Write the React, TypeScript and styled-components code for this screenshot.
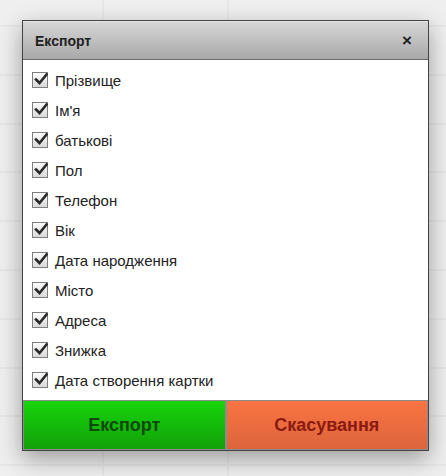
import React, { useState } from 'react';
import styled, { createGlobalStyle } from 'styled-components';

const GlobalStyle = createGlobalStyle`
  html, body {
    margin: 0;
    padding: 0;
    width: 446px;
    height: 476px;
    overflow: hidden;
    background: #efefef;
  }
`;

const Page = styled.div`
  width: 446px;
  height: 476px;
  padding: 20px 0 0 22px;
  box-sizing: border-box;
  background-color: #efefef;
  background-image:
    repeating-linear-gradient(to bottom, transparent 0, transparent 25px, #e7e7e7 25px, #e7e7e7 27px, transparent 27px, transparent 48.8px),
    linear-gradient(to right, transparent 102px, #e8e8e8 102px, #e8e8e8 104px, transparent 104px, transparent 227px, #e8e8e8 227px, #e8e8e8 229px, transparent 229px);
  font-family: "Liberation Sans", Arial, sans-serif;
`;

const Dialog = styled.div`
  width: 407px;
  box-sizing: border-box;
  border: 1px solid #444;
  background: #fff;
  box-shadow: 0 8px 22px rgba(0, 0, 0, 0.35);
`;

const Header = styled.div`
  height: 39px;
  display: flex;
  align-items: center;
  justify-content: space-between;
  padding: 0 16px 0 12px;
  background: linear-gradient(to bottom, #d6d6d6, #a9a9a9);
  border-bottom: 1px solid #6a6a6a;
  border-top: 1px solid #e6e6e6;
  box-sizing: border-box;
`;

const Title = styled.span`
  font-size: 14px;
  font-weight: bold;
  color: #222;
`;

const Close = styled.span`
  font-size: 17px;
  font-weight: bold;
  color: #222;
  cursor: pointer;
`;

const List = styled.div`
  padding: 5px 0 5px 9px;
`;

const Row = styled.label`
  height: 30px;
  display: flex;
  align-items: center;
  gap: 7px;
  font-size: 15px;
  color: #222;
  cursor: pointer;
`;

const Box = styled.span`
  width: 16px;
  height: 16px;
  box-sizing: border-box;
  border: 1px solid #7e7e7e;
  background: linear-gradient(to bottom, #fdfdfd, #d8d8d8);
  position: relative;
  flex-shrink: 0;

  svg {
    position: absolute;
    left: 1px;
    top: -1px;
  }
`;

const Footer = styled.div`
  display: flex;
  gap: 2px;
  background: #8c8c8c;
  padding: 1px;
`;

const Button = styled.button<{ $variant: 'ok' | 'cancel' }>`
  flex: 1;
  height: 48px;
  border: none;
  padding: 0;
  font-family: inherit;
  font-size: 18px;
  font-weight: bold;
  cursor: pointer;
  color: ${p => (p.$variant === 'ok' ? '#0d4a08' : '#8a1a10')};
  background: ${p =>
    p.$variant === 'ok'
      ? 'linear-gradient(to bottom, #17d40b, #12a109)'
      : 'linear-gradient(to bottom, #fa7442, #dc643c)'};
`;

const fields = [
  'Прізвище',
  "Ім'я",
  'батькові',
  'Пол',
  'Телефон',
  'Вік',
  'Дата народження',
  'Місто',
  'Адреса',
  'Знижка',
  'Дата створення картки',
];

const Check = () => (
  <svg width="14" height="14" viewBox="0 0 14 14">
    <path d="M2 7.5 L5.5 11 L12.5 2.5" fill="none" stroke="#2a2a2a" strokeWidth="2.6" strokeLinecap="square" />
  </svg>
);

const App = (): JSX.Element => {
  const [checked, setChecked] = useState<boolean[]>(fields.map(() => true));

  const toggle = (idx: number): void => {
    setChecked(c => c.map((v, i) => (i === idx ? !v : v)));
  };

  return (
    <Page>
      <GlobalStyle />
      <Dialog>
        <Header>
          <Title>Експорт</Title>
          <Close>×</Close>
        </Header>
        <List>
          {fields.map((f, idx) => (
            <Row key={idx} onClick={() => toggle(idx)}>
              <Box>{checked[idx] && <Check />}</Box>
              <span>{f}</span>
            </Row>
          ))}
        </List>
        <Footer>
          <Button $variant="ok">Експорт</Button>
          <Button $variant="cancel">Скасування</Button>
        </Footer>
      </Dialog>
    </Page>
  );
};

export default App;
